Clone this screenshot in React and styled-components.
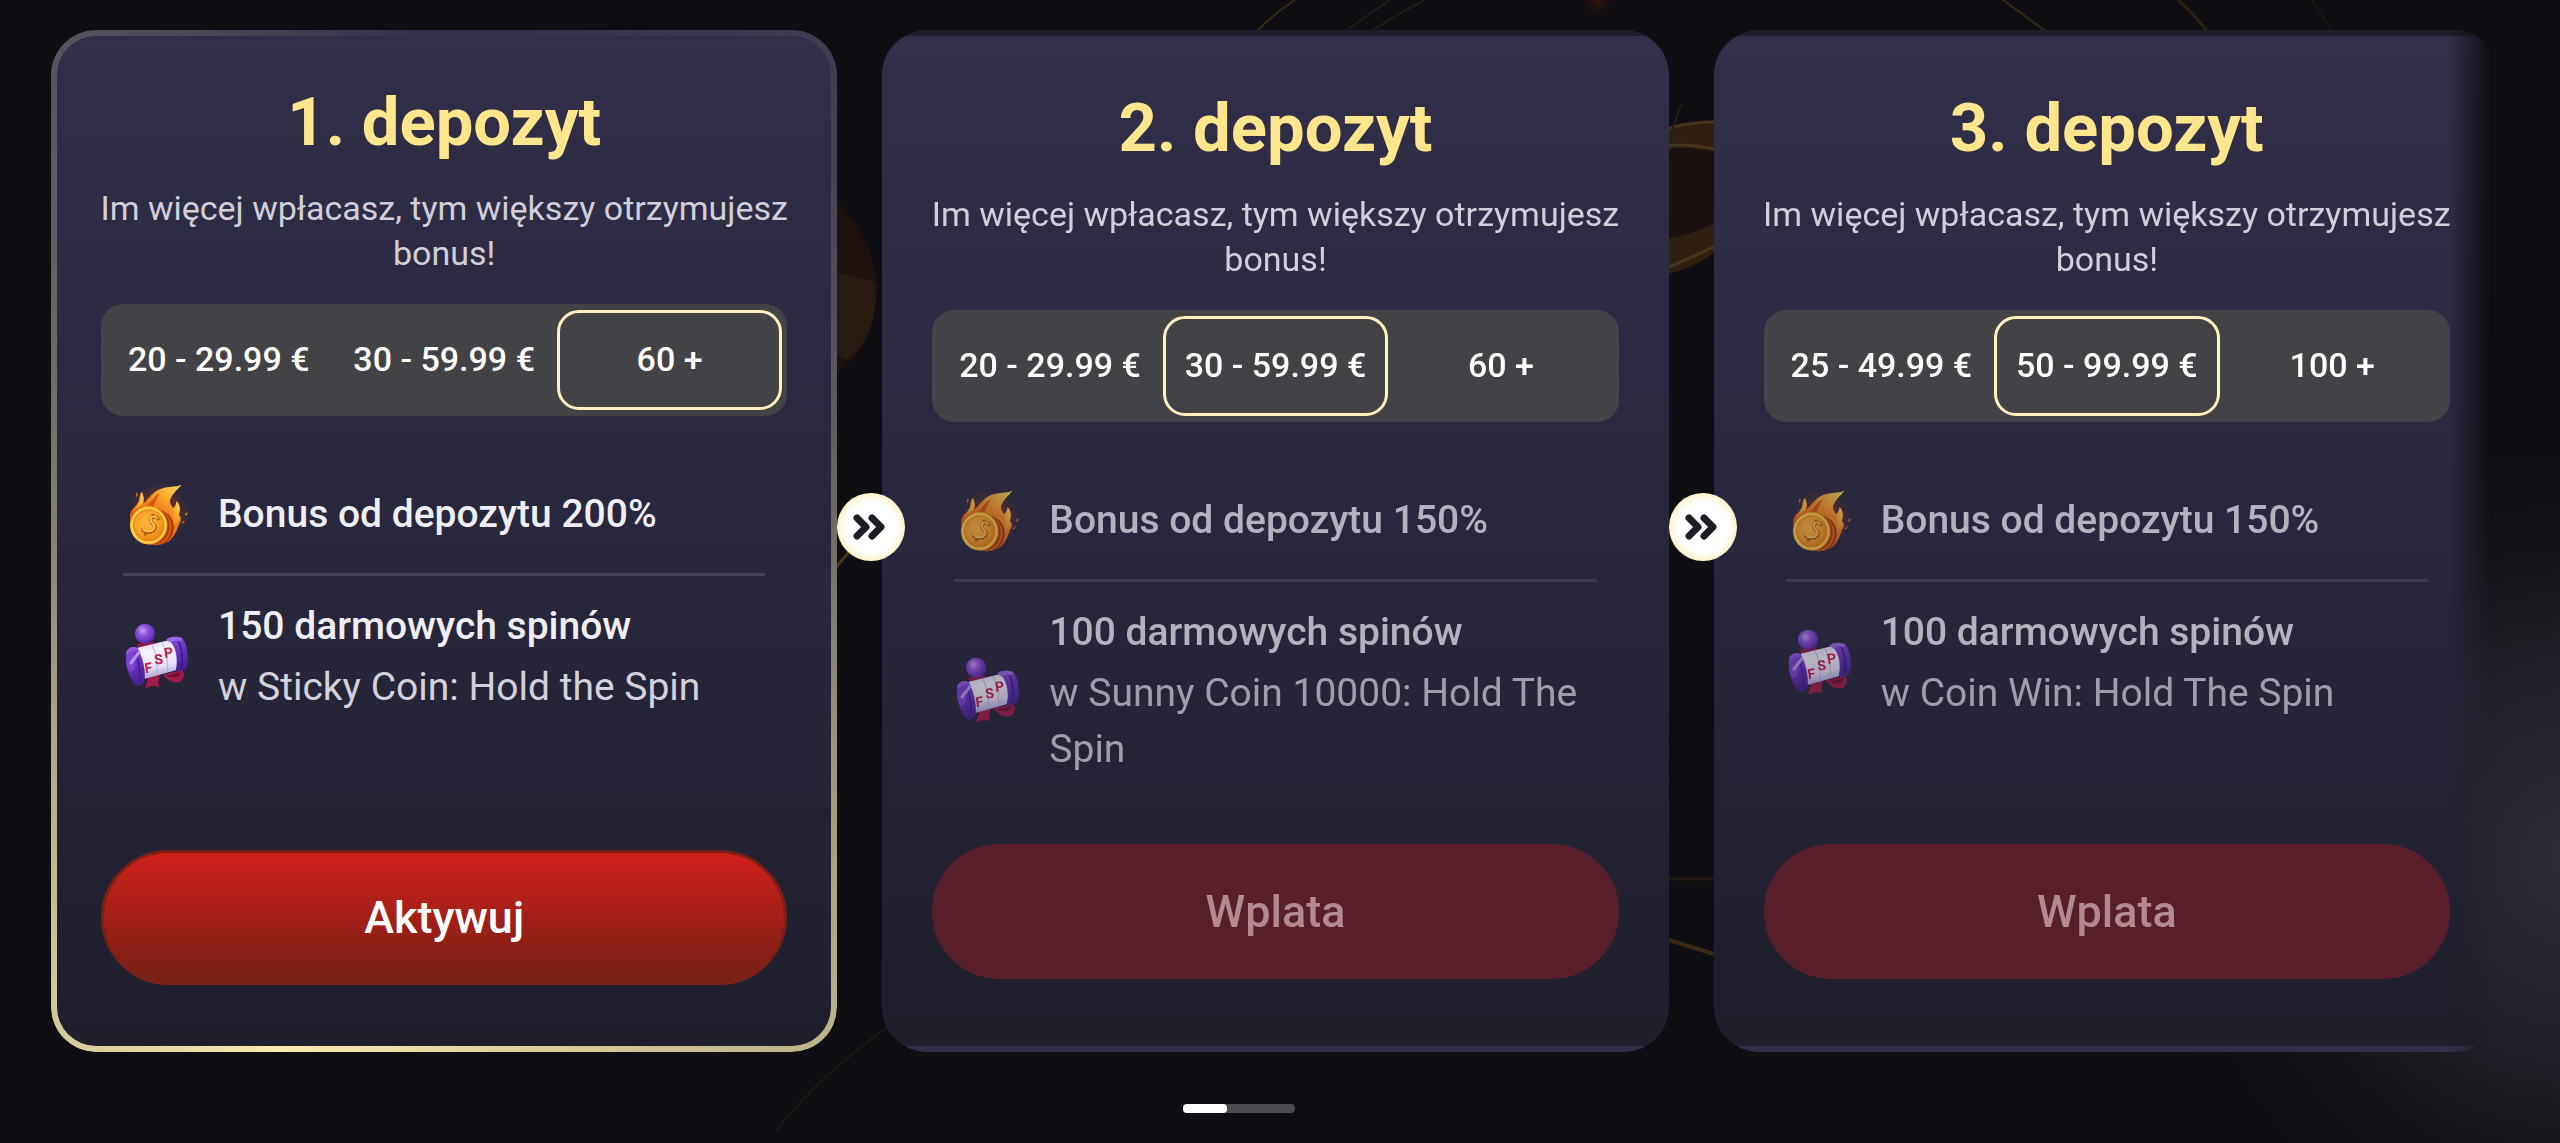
import React, { useState, useId } from 'react';
import styled, { createGlobalStyle, css } from 'styled-components';

const deposits = [
  {
    id: 1,
    title: '1. depozyt',
    ranges: ['20 - 29.99 €', '30 - 59.99 €', '60 +'],
    selected: 2,
    bonus: 'Bonus od depozytu 200%',
    spins: '150 darmowych spinów',
    game: 'w Sticky Coin: Hold the Spin',
    action: 'Aktywuj',
    active: true,
  },
  {
    id: 2,
    title: '2. depozyt',
    ranges: ['20 - 29.99 €', '30 - 59.99 €', '60 +'],
    selected: 1,
    bonus: 'Bonus od depozytu 150%',
    spins: '100 darmowych spinów',
    game: 'w Sunny Coin 10000: Hold The Spin',
    action: 'Wplata',
    active: false,
  },
  {
    id: 3,
    title: '3. depozyt',
    ranges: ['25 - 49.99 €', '50 - 99.99 €', '100 +'],
    selected: 1,
    bonus: 'Bonus od depozytu 150%',
    spins: '100 darmowych spinów',
    game: 'w Coin Win: Hold The Spin',
    action: 'Wplata',
    active: false,
  },
];

const FireCoin = () => {
  const id = useId();
  return (
    <Icon viewBox="42 30 201 201" aria-hidden="true">
      <defs>
        <linearGradient id={`${id}f`} x1="0.8" y1="0" x2="0.2" y2="1">
          <stop offset="0" stopColor="#ffc94a" />
          <stop offset="0.35" stopColor="#f48a1f" />
          <stop offset="0.75" stopColor="#e0520f" />
          <stop offset="1" stopColor="#b8380c" />
        </linearGradient>
        <linearGradient id={`${id}y`} x1="0.9" y1="0" x2="0.3" y2="1">
          <stop offset="0" stopColor="#ffd75c" />
          <stop offset="0.6" stopColor="#fca326" />
          <stop offset="1" stopColor="#ee7415" />
        </linearGradient>
        <radialGradient id={`${id}c`} cx="0.42" cy="0.38" r="0.65">
          <stop offset="0" stopColor="#fbb53a" />
          <stop offset="0.6" stopColor="#f7a127" />
          <stop offset="1" stopColor="#e58214" />
        </radialGradient>
        <radialGradient id={`${id}g`}>
          <stop offset="0.4" stopColor="#c2410c" stopOpacity="0.45" />
          <stop offset="1" stopColor="#c2410c" stopOpacity="0" />
        </radialGradient>
      </defs>
      <ellipse cx="150" cy="128" rx="88" ry="88" fill={`url(#${id}g)`} />
      <path
        fill={`url(#${id}f)`}
        d="M64 150 C58 122 76 112 88 104 C92 90 88 78 98 65 C107 80 104 92 104 100 C120 86 132 60 166 53 C186 49 204 50 218 44 C204 58 190 72 184 88 C181 98 186 106 192 114 C200 108 202 100 203 93 C216 106 214 122 210 136 C217 140 214 146 216 150 C206 168 202 194 184 210 C160 232 104 230 84 206 Z"
      />
      <path
        fill={`url(#${id}y)`}
        d="M143 116 C150 98 160 76 178 62 C190 54 206 52 217 45 C204 60 186 74 178 94 C172 108 178 118 184 126 C186 136 178 142 172 140 C160 130 150 122 143 116 Z"
      />
      <path fill={`url(#${id}y)`} d="M72 118 C84 106 94 92 98 66 C107 84 104 98 97 106 C88 112 78 118 70 130 Z" />
      <path fill={`url(#${id}y)`} d="M192 118 C201 111 203 102 203 94 C214 108 213 124 207 138 C212 143 209 149 204 156 C198 166 194 172 188 176 C192 158 196 138 192 118 Z" />
      <path fill="#d4560f" d="M110 112 C126 98 132 82 152 70 C140 88 138 104 132 114 Z" />
      <path fill="#e0701a" d="M82 66 C90 72 84 80 81 82 C78 76 84 72 82 66 Z M226 133 L237 126 L233 137 Z M216 158 L228 151 L223 160 Z" />
      <ellipse cx="144" cy="172" rx="50" ry="53" fill="#a5360b" />
      <ellipse cx="136" cy="171" rx="52" ry="55" fill="#d9600f" />
      <ellipse cx="128" cy="169" rx="54" ry="56" fill="#a8440b" />
      <ellipse cx="119" cy="166" rx="56" ry="57" fill="#fdb42c" />
      <ellipse cx="118" cy="166" rx="53" ry="54" fill="#ffd04a" />
      <ellipse cx="119" cy="166" rx="47" ry="48" fill="#dc7d14" />
      <ellipse cx="120" cy="167" rx="45" ry="46" fill={`url(#${id}c)`} />
      <g fill="none" strokeLinecap="round" strokeLinejoin="round">
        <path stroke="#b5600e" strokeWidth="10" d="M147 146 C138 134 122 142 126 154 C130 164 142 164 138 176 C132 190 112 190 101 180 M132 136 L137 142 M112 186 L109 192" />
        <path stroke="#ffce5a" strokeWidth="5" d="M144 144 C136 134 122 141 125 152 C129 162 140 163 136 174 C131 186 112 187 102 178" />
      </g>
    </Icon>
  );
};

const SlotDrum = () => {
  const id = useId();
  return (
    <Icon viewBox="42 38 201 201" aria-hidden="true">
      <defs>
        <radialGradient id={`${id}k`} cx="0.38" cy="0.35" r="0.7">
          <stop offset="0" stopColor="#cda0f5" />
          <stop offset="0.4" stopColor="#8d4fdc" />
          <stop offset="1" stopColor="#5423a6" />
        </radialGradient>
        <linearGradient id={`${id}p`} x1="0" y1="0" x2="0.3" y2="1">
          <stop offset="0" stopColor="#8c50e0" />
          <stop offset="0.5" stopColor="#6a35c4" />
          <stop offset="1" stopColor="#4b2096" />
        </linearGradient>
        <linearGradient id={`${id}w`} x1="0" y1="0" x2="0.2" y2="1">
          <stop offset="0" stopColor="#d8d2ee" />
          <stop offset="0.35" stopColor="#f6f3fd" />
          <stop offset="0.75" stopColor="#e6e1f5" />
          <stop offset="1" stopColor="#a9a3dc" />
        </linearGradient>
      </defs>
      <path fill="#8e1741" d="M84 100 L134 92 L138 108 L88 118 Z" />
      <path fill="#a11c48" d="M120 196 L152 190 L148 220 L152 230 L132 226 L108 234 Z" />
      <path fill="#a11c48" d="M162 192 L220 180 C228 192 226 206 214 214 C196 220 176 214 162 192 Z" />
      <path fill="#6f1238" d="M170 196 L216 186 C214 200 196 206 170 196 Z" />
      <path fill={`url(#${id}w)`} d="M86 112 L184 88 C202 108 212 146 206 178 L106 206 Z" />
      <path fill="none" stroke="#b7aedb" strokeWidth="3" d="M128 103 C142 128 146 160 144 194 M158 96 C172 120 178 156 175 186" />
      <path fill={`url(#${id}p)`} d="M172 88 C182 76 208 76 220 84 C236 104 242 148 232 172 C226 180 210 184 200 182 C208 150 202 116 186 96 Z" />
      <path fill="#9c6ae6" d="M172 88 C184 78 208 78 220 84 L214 94 C202 88 194 90 186 97 Z" />
      <path fill="none" stroke="#3c1680" strokeWidth="4" d="M208 92 C219 112 223 150 216 178" />
      <path fill={`url(#${id}p)`} d="M52 124 C58 110 76 106 86 114 C100 138 110 176 107 208 C102 224 86 230 78 222 C56 196 46 156 52 124 Z" />
      <path fill="#9159e0" d="M52 124 C58 110 76 106 86 114 L81 122 C74 118 62 122 54 134 Z" />
      <path fill="none" stroke="#421a8b" strokeWidth="4" d="M79 128 C91 154 95 190 90 220" />
      <ellipse cx="66" cy="160" rx="13" ry="24" fill="#7b45cf" />
      <path fill="none" stroke="#b994f0" strokeWidth="9" strokeLinecap="round" d="M90 126 L66 158" />
      <circle cx="108" cy="70" r="30" fill={`url(#${id}k)`} />
      <DrumText x="109" y="189" transform="rotate(-8 109 189)">F</DrumText>
      <DrumText x="138" y="163" transform="rotate(-8 138 163)">S</DrumText>
      <DrumText x="167" y="143" transform="rotate(-8 167 143)">P</DrumText>
    </Icon>
  );
};

const Backdrop = () => (
  <Scene viewBox="0 0 2560 1143" preserveAspectRatio="xMidYMid slice" aria-hidden="true">
    <defs>
      <radialGradient id="haze">
        <stop offset="0" stopColor="#2b2c38" />
        <stop offset="0.45" stopColor="#24242d" stopOpacity="0.8" />
        <stop offset="1" stopColor="#0f0e12" stopOpacity="0" />
      </radialGradient>
      <radialGradient id="ember">
        <stop offset="0" stopColor="#33130f" />
        <stop offset="1" stopColor="#0f0e12" stopOpacity="0" />
      </radialGradient>
    </defs>
    <ellipse cx="2570" cy="860" rx="430" ry="450" fill="url(#haze)" />
    <circle cx="1598" cy="0" r="22" fill="url(#ember)" />
    <path fill="#1f120e" d="M820 190 C850 205 875 245 877 290 C876 330 862 355 838 372 L800 372 V190 Z" />
    <path fill="#2a1b10" d="M820 268 L875 282 C879 322 864 348 846 360 L820 345 Z" />
    <path fill="#2e1f11" d="M1655 136 C1675 124 1695 121 1730 122 V240 C1705 262 1685 272 1655 276 Z" />
    <path fill="#1b100f" d="M1655 152 C1680 145 1700 148 1730 156 V212 C1705 232 1685 236 1655 240 Z" />
    <g fill="none" strokeWidth="3">
      <path stroke="#46351a" d="M1655 134 C1675 124 1700 121 1730 122 M1655 148 C1680 142 1700 146 1730 152 M1655 272 C1685 262 1700 252 1730 240" />
      <path stroke="#3a2812" strokeWidth="2" d="M1295 0 Q1276 12 1257 31 M2003 0 Q2024 15 2045 31" />
      <path stroke="#302010" d="M2178 0 Q2194 14 2207 31" />
      <path stroke="#251c14" strokeWidth="2" d="M1425 0 Q1400 12 1372 31 M1390 0 L1345 31 M1672 130 L1681 104" />
      <path stroke="#1a1714" strokeWidth="2" d="M2312 0 L2332 31" />
      <path stroke="#4a3413" d="M834 570 L852 548" />
      <path stroke="#3a2818" strokeWidth="4" d="M1669 940 L1714 954" />
      <path stroke="#24180f" d="M1669 879 H1714" />
      <path stroke="#1c1a16" strokeWidth="2" d="M890 1025 C842 1060 808 1090 775 1132" />
    </g>
  </Scene>
);

const DepositCard = ({ deposit, withArrow }) => {
  const [selected, setSelected] = useState(deposit.selected);

  return (
    <Card $active={deposit.active}>
      {withArrow && (
        <NextBadge type="button" aria-label="Następny">
          <svg viewBox="0 0 68 68" aria-hidden="true">
            <path
              d="M20 25 L29 34 L20 43 M35 25 L44 34 L35 43"
              fill="none"
              stroke="#1d1c27"
              strokeWidth="7"
              strokeLinecap="round"
              strokeLinejoin="round"
            />
          </svg>
        </NextBadge>
      )}
      <Title>{deposit.title}</Title>
      <Subtitle>Im więcej wpłacasz, tym większy otrzymujesz bonus!</Subtitle>
      <Tabs role="group" aria-label={deposit.title}>
        {deposit.ranges.map((range, index) => (
          <Tab
            key={range}
            type="button"
            aria-pressed={index === selected}
            $selected={index === selected}
            onClick={() => setSelected(index)}
          >
            {range}
          </Tab>
        ))}
      </Tabs>
      <Rewards $dimmed={!deposit.active}>
        <Reward>
          <FireCoin />
          <RewardText>
            <strong>{deposit.bonus}</strong>
          </RewardText>
        </Reward>
        <Reward>
          <SlotDrum />
          <RewardText>
            <strong>{deposit.spins}</strong>
            <span>{deposit.game}</span>
          </RewardText>
        </Reward>
      </Rewards>
      <ActionButton type="button" disabled={!deposit.active}>
        {deposit.action}
      </ActionButton>
    </Card>
  );
};

const App = () => {
  return (
    <>
      <GlobalStyle />
      <Page>
        <Backdrop />
        <Carousel>
          {deposits.map((deposit, index) => (
            <DepositCard key={deposit.id} deposit={deposit} withArrow={index > 0} />
          ))}
        </Carousel>
        <Progress>
          <ProgressValue />
        </Progress>
      </Page>
    </>
  );
};

export default App;

const GlobalStyle = createGlobalStyle`
  * {
    box-sizing: border-box;
  }

  body {
    margin: 0;
    background: #0f0e12;
    color: #fff;
    font-family: Roboto, "Liberation Sans", sans-serif;
  }

  button {
    font-family: inherit;
  }
`;

const Page = styled.main`
  position: relative;
  display: flex;
  flex-direction: column;
  min-height: 100vh;
  padding: 30px 60px 0 51px;
  overflow: hidden;
`;

const Scene = styled.svg`
  position: absolute;
  inset: 0;
  width: 100%;
  height: 100%;
`;

const Carousel = styled.section`
  position: relative;
  display: grid;
  grid-template-columns: repeat(3, minmax(0, 1fr));
  gap: 45px;
  mask-image: linear-gradient(to right, #000 calc(100% - 50px), transparent calc(100% - 8px));
`;

const Card = styled.article`
  position: relative;
  display: flex;
  flex-direction: column;
  padding: 50px 50px 67px;
  border-radius: 45px;
  background: linear-gradient(#312f49, #2a283f 42%, #1f1e2b);

  ${({ $active }) =>
    $active
      ? css`
          &::before {
            content: '';
            position: absolute;
            inset: 0;
            padding: 6px;
            border-radius: inherit;
            pointer-events: none;
            background: conic-gradient(
              rgba(255, 238, 176, 0) 0deg,
              rgba(160, 160, 130, 0.12) 38deg,
              rgba(225, 220, 175, 0.4) 90deg,
              rgba(240, 228, 170, 0.75) 142deg,
              rgba(255, 240, 180, 0.98) 198deg,
              rgba(245, 232, 175, 0.85) 218deg,
              rgba(225, 220, 175, 0.5) 270deg,
              rgba(170, 170, 140, 0.3) 322deg,
              rgba(255, 238, 176, 0) 360deg
            );
            mask: linear-gradient(#000 0 0) content-box exclude, linear-gradient(#000 0 0);
          }
        `
      : css`
          border: solid transparent;
          border-width: 6px 0;
        `}
`;

const NextBadge = styled.button`
  position: absolute;
  top: 457px;
  left: -45px;
  width: 68px;
  height: 68px;
  padding: 0;
  border: 0;
  border-radius: 50%;
  background: radial-gradient(circle, #fff 52%, #fff3c4 74%);
  cursor: pointer;

  svg {
    display: block;
  }
`;

const Title = styled.h2`
  margin: 0 0 22px;
  color: #ffe68c;
  font-size: 67px;
  font-weight: 700;
  line-height: 84px;
  text-align: center;
`;

const Subtitle = styled.p`
  margin: 0 -6px 28px;
  color: #d0cfda;
  font-size: 34px;
  line-height: 45px;
  text-align: center;
`;

const Tabs = styled.div`
  display: grid;
  grid-template-columns: repeat(3, 1fr);
  height: 112px;
  padding: 6px 5px;
  border-radius: 22px;
  background: #434247;
`;

const Tab = styled.button`
  padding: 0 0 2px;
  border: 3px solid ${({ $selected }) => ($selected ? '#fff0bf' : 'transparent')};
  border-radius: 22px;
  background: none;
  color: #fff;
  font-size: 34px;
  font-weight: 500;
  white-space: nowrap;
  cursor: pointer;
`;

const Rewards = styled.ul`
  margin: 64px 22px 67px;
  padding: 0;
  list-style: none;
  opacity: ${({ $dimmed }) => ($dimmed ? 0.7 : 1)};
`;

const Reward = styled.li`
  display: flex;
  align-items: center;
  gap: 28px;

  & + & {
    margin-top: 26px;
    padding-top: 22px;
    border-top: 3px solid #444355;
  }
`;

const Icon = styled.svg`
  flex: none;
  width: 67px;
  height: 67px;
  overflow: visible;
`;

const DrumText = styled.text`
  fill: #c41c4c;
  font-family: Roboto, sans-serif;
  font-size: 42px;
  font-weight: 700;
`;

const RewardText = styled.div`
  display: flex;
  flex-direction: column;
  gap: 5px;
  color: #d2d1dc;
  font-size: 39px;
  line-height: 56px;

  strong {
    color: #efeef5;
    font-weight: 500;
  }
`;

const ActionButton = styled.button`
  height: 135px;
  margin-top: auto;
  padding: 0;
  border: 3px solid #7a2019;
  border-radius: 68px;
  background: linear-gradient(#d1211a, #741f15) border-box;
  color: #fff;
  font-size: 45px;
  font-weight: 500;
  cursor: pointer;

  &:disabled {
    border-color: #581f2b;
    background: #581f2b;
    color: #b18b91;
    cursor: default;
  }
`;

const Progress = styled.div`
  position: relative;
  align-self: center;
  width: 112px;
  height: 9px;
  margin: 52px 74px 0 0;
  border-radius: 4px;
  background: #4b4a4e;
`;

const ProgressValue = styled.div`
  width: 40%;
  height: 100%;
  border-radius: 4px;
  background: #fff;
`;
